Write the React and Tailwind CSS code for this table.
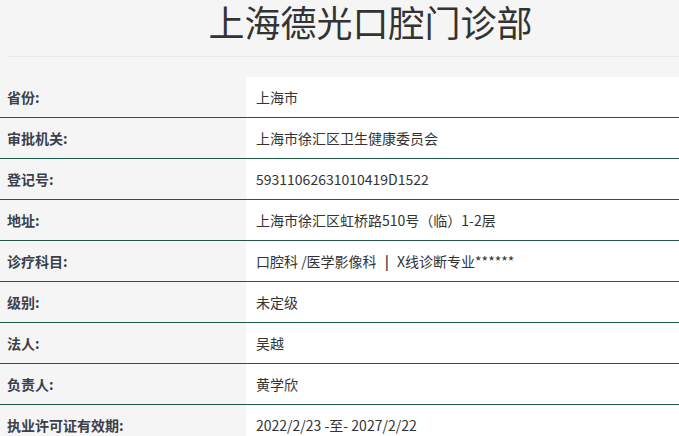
import React from 'react'

const rows = [
  ['省份:', '上海市'],
  ['审批机关:', '上海市徐汇区卫生健康委员会'],
  ['登记号:', '59311062631010419D1522'],
  ['地址:', '上海市徐汇区虹桥路510号（临）1-2层'],
  ['诊疗科目:', 'subjects'],
  ['级别:', '未定级'],
  ['法人:', '吴越'],
  ['负责人:', '黄学欣'],
  ['执业许可证有效期:', '2022/2/23 -至- 2027/2/22'],
]

function App() {
  return (
    <div
      className="w-[679px] h-[436px] overflow-hidden bg-[#f5f5f5] text-[#333]"
      style={{ fontFamily: '"Noto Sans CJK SC", "Noto Sans", sans-serif' }}
    >
      <h1 className="pl-[62px] text-center text-[36px] leading-[42px] font-normal text-[#333]">
        上海德光口腔门诊部
      </h1>
      <div className="mt-[14px] ml-[7px] border-t border-[#e9e9e9]" />
      <div className="mt-[20px]">
        {rows.map(([label, value]) => (
          <div key={label} className="flex h-[41px] border-b border-[#1d5b45]">
            <div className="w-[246px] shrink-0 pl-[7px] flex items-center text-[14px] font-bold text-[#3c3f4a]">
              {label}
            </div>
            <div className="flex-1 bg-white pl-[10px] flex items-center text-[14px] text-[#333]">
              {value === 'subjects' ? (
                <span>
                  口腔科 /医学影像科 <span className="mx-[5px] font-bold text-[#3a3f4a]">|</span> X线诊断专业******
                </span>
              ) : (
                value
              )}
            </div>
          </div>
        ))}
      </div>
    </div>
  )
}

export default App
